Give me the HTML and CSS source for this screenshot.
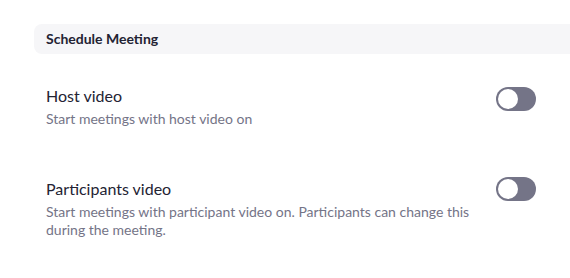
FILE: index.html
```html
<!DOCTYPE html>
<html>
<head>
<meta charset="utf-8">
<link rel="stylesheet" href="styles.css">
</head>
<body>
<div class="page">
  <div class="section-header">Schedule Meeting</div>
  <div class="setting setting-first">
    <div class="setting-text">
      <div class="setting-title">Host video</div>
      <div class="setting-desc">Start meetings with host video on</div>
    </div>
    <div class="toggle"><span class="knob"></span></div>
  </div>
  <div class="setting setting-second">
    <div class="setting-text">
      <div class="setting-title">Participants video</div>
      <div class="setting-desc">Start meetings with participant video on. Participants can change this during the meeting.</div>
    </div>
    <div class="toggle toggle-raised"><span class="knob"></span></div>
  </div>
</div>
</body>
</html>
```
FILE: styles.css
```css
html, body {
  margin: 0;
  padding: 0;
  background: #ffffff;
}
body {
  font-family: Lato, "Open Sans", sans-serif;
  overflow: hidden;
}
.page {
  padding: 24px 0 0 34px;
  width: 560px;
}
.section-header {
  background: #f6f6f8;
  border-radius: 8px 0 0 8px;
  height: 30px;
  line-height: 30px;
  padding-left: 12px;
  font-size: 14px;
  font-weight: bold;
  color: #232333;
}
.setting {
  display: flex;
  align-items: flex-start;
  padding: 0 0 0 12px;
  width: 490px;
}
.setting-first {
  margin-top: 32px;
}
.setting-second {
  margin-top: 51px;
}
.setting-text {
  flex: 1;
}
.setting-title {
  font-size: 16px;
  line-height: 20px;
  color: #232333;
}
.setting-desc {
  margin-top: 4px;
  font-size: 14px;
  line-height: 18px;
  color: #747487;
  max-width: 440px;
}
.toggle {
  width: 40px;
  height: 24px;
  border-radius: 12px;
  background: #747487;
  box-sizing: border-box;
  padding: 2px;
  margin-top: 1px;
  display: flex;
}
.toggle-raised {
  margin-top: -2px;
}
.knob {
  width: 20px;
  height: 20px;
  border-radius: 50%;
  background: #ffffff;
}
```
